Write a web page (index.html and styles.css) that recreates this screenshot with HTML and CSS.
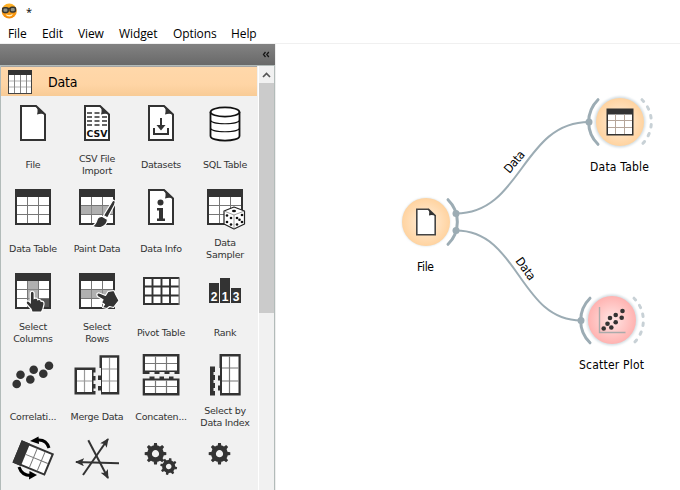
FILE: index.html
```html
<!DOCTYPE html>
<html lang="en">
<head>
<meta charset="utf-8">
<title>*</title>
<link rel="stylesheet" href="styles.css">
</head>
<body>
<svg class="defs" width="0" height="0" aria-hidden="true">
  <defs>
    <g id="page">
      <path d="M20 10H35L44 18.500V44H20Z" fill="#fff" stroke="#333" stroke-width="2"/>
      <path d="M34.500 9L45 19C42 17.500 39 17.500 36 18.500C37 15 37 12 34.500 9Z" fill="#333"/>
    </g>
    <g id="table">
      <rect x="14" y="9" width="36" height="36" fill="#333"/>
      <rect x="16" y="17" width="32" height="26" fill="#fff"/>
      <path d="M26.500 17V43M37.500 17V43M16 25.500H48M16 34.500H48" stroke="#777" fill="none"/>
    </g>
    <path id="hand" d="M29.300 29.500C29.300 26.500 33 26.500 33.200 29.500V34.500C35 33.700 36.500 34.300 36.800 35.800C38.500 35 39.900 35.800 40.200 37.300C42 36.800 43.300 38 43 40.300L42 44.500L40.500 48H31L30 45L25.500 40C24.300 37 26.500 35.800 29.300 38.500Z" fill="#333" stroke="#fff" stroke-width="1.200"/>
    <g id="gear">
      <circle r="6" fill="none" stroke="#333" stroke-width="4.800"/>
      <path d="M-1.900-7.500L-1.400-10.800H1.400L1.900-7.500ZM-1.900 7.500L-1.400 10.800H1.400L1.900 7.500ZM-7.500-1.900L-10.800-1.400V1.400L-7.500 1.900ZM7.500-1.900L10.800-1.400V1.400L7.500 1.900Z" fill="#333"/>
      <path transform="rotate(45)" d="M-1.900-7.500L-1.400-10.800H1.400L1.900-7.500ZM-1.900 7.500L-1.400 10.800H1.400L1.900 7.500ZM-7.500-1.900L-10.800-1.400V1.400L-7.500 1.900ZM7.500-1.900L10.800-1.400V1.400L7.500 1.900Z" fill="#333"/>
    </g>
    <marker id="tip" markerUnits="userSpaceOnUse" markerWidth="10" markerHeight="8" refX="8" refY="4" orient="auto"><path d="M0 0L9 4L0 8L2 4Z" fill="#333"/></marker>
    <radialGradient id="orange"><stop offset="0" stop-color="#fff0de"/><stop offset="1" stop-color="#ffd3a0"/></radialGradient>
    <radialGradient id="pink"><stop offset="0" stop-color="#ffe6e5"/><stop offset="1" stop-color="#ffb3b1"/></radialGradient>
    <linearGradient id="face" x1="0" y1="0" x2="0" y2="1"><stop offset="0" stop-color="#ffb52b"/><stop offset="1" stop-color="#f58a07"/></linearGradient>
    <filter id="glow" x="-20%" y="-20%" width="140%" height="140%"><feGaussianBlur stdDeviation="1.200"/></filter>
  </defs>
</svg>

<header class="titlebar">
  <svg class="app-icon" width="16" height="16" viewBox="0 0 16 16">
    <circle cx="8.200" cy="8" r="7.600" fill="url(#face)"/>
    <path d="M1 5.500H15" stroke="#39372f" stroke-width="1.500"/>
    <rect x="1.700" y="4.800" width="5.500" height="4.600" rx="2" fill="#8f928a" stroke="#39372f" stroke-width="1.500"/>
    <rect x="9" y="4.300" width="5.500" height="4.600" rx="2" fill="#8f928a" stroke="#39372f" stroke-width="1.500"/>
    <path d="M4.500 11.300Q8.500 13 12 10.800Q11 13.800 8.300 13.600Q5.500 13.400 4.500 11.300Z" fill="#fff3c4"/>
  </svg>
  <span class="doc-name">*</span>
</header>
<nav class="menubar">
  <span>File</span><span>Edit</span><span>View</span><span>Widget</span><span>Options</span><span>Help</span>
</nav>

<main class="workspace">
  <aside class="dock">
    <div class="dock-head">
      <svg width="8" height="7" viewBox="0 0 8 7"><path d="M3.500 1L1.500 3.500L3.500 6M6.800 1L4.800 3.500L6.800 6" fill="none" stroke="#161616" stroke-width="1.300"/></svg>
    </div>
    <div class="toolbox">
      <div class="tools">
        <div class="category">
          <svg width="24" height="24" viewBox="0 0 24 24"><rect width="24" height="24" fill="#444"/><rect width="24" height="5" fill="#333"/><rect x="1" y="5" width="22" height="18" fill="#fff"/><path d="M1 11H23M1 17H23" stroke="#ccc" stroke-width="1.500"/><path d="M6.500 5V23M12.500 5V23M18.500 5V23" stroke="#888"/></svg>
          <span>Data</span>
        </div>
        <div class="grid">
          <div class="tool"><svg viewBox="0 0 64 56"><use href="#page"/></svg><span>File</span></div>
          <div class="tool"><svg viewBox="0 0 64 56"><use href="#page"/><path d="M22 17H35M22 21H42M22 25H42M22 29H42" stroke="#333" stroke-width="1.700" stroke-dasharray="5 2.500"/><text class="csv" x="32" y="41.200" textLength="21" lengthAdjust="spacingAndGlyphs">CSV</text></svg><span>CSV File<br>Import</span></div>
          <div class="tool"><svg viewBox="0 0 64 56"><use href="#page"/><path d="M25 32V38H39V32" fill="none" stroke="#333" stroke-width="2"/><path d="M31 22H33V29H36.500L32 34.500L27.500 29H31Z" fill="#333"/></svg><span>Datasets</span></div>
          <div class="tool"><svg viewBox="0 0 64 56"><path d="M17.500 16V40C17.500 46.200 46.500 46.200 46.500 40V16" fill="#fff" stroke="#111" stroke-width="1.800"/><ellipse cx="32" cy="16" rx="14.500" ry="4.600" fill="#fff" stroke="#111" stroke-width="1.800"/><path d="M17.500 24C18 29 46 29 46.500 24M17.500 32C18 37 46 37 46.500 32" fill="none" stroke="#111" stroke-width="1.200"/></svg><span>SQL Table</span></div>

          <div class="tool"><svg viewBox="0 0 64 56"><use href="#table"/></svg><span>Data Table</span></div>
          <div class="tool"><svg viewBox="0 0 64 56"><use href="#table"/><path d="M16 26H48V34H16Z" fill="#b0b0b0"/><path d="M26.500 26V34M37.500 26V34" stroke="#888"/><path d="M48 20L50.500 21.500L49.500 25L42.500 38L38.500 35.500L46.500 22.500ZM37.500 36.500L42.500 39.500C42 46 35 50 27 46C31 45 31 42 32.500 38.500C34 36.500 35.500 36 37.500 36.500Z" fill="#333" stroke="#fff" stroke-width="1.200"/></svg><span>Paint Data</span></div>
          <div class="tool"><svg viewBox="0 0 64 56"><use href="#page"/><circle cx="31.500" cy="22.500" r="3" fill="#333"/><path d="M28 28H34V38.500H36V41H28V38.500H30V30.500H28Z" fill="#333"/></svg><span>Data Info</span></div>
          <div class="tool"><svg viewBox="0 0 64 56"><use href="#table"/><path d="M31 31L41 27L51.500 31V44L41 49L31 44Z" fill="#fff" stroke="#222" stroke-width="1.200" stroke-linejoin="round"/><path d="M31 31L41 35L51.500 31M41 35V49" fill="none" stroke="#777" stroke-width=".7"/><g fill="#111"><ellipse cx="41" cy="31" rx="2" ry="1.200"/><circle cx="34" cy="35.500" r="1.300"/><circle cx="38" cy="38" r="1.300"/><circle cx="34" cy="42" r="1.300"/><circle cx="38" cy="44.500" r="1.300"/><circle cx="44" cy="38" r="1.300"/><circle cx="49" cy="35" r="1.300"/><circle cx="46.500" cy="39.800" r="1.300"/><circle cx="44" cy="44.500" r="1.300"/><circle cx="49" cy="42" r="1.300"/></g></svg><span>Data<br>Sampler</span></div>

          <div class="tool"><svg viewBox="0 0 64 56"><use href="#table"/><path d="M27 17H37V43H27Z" fill="#b0b0b0"/><path d="M27 25.500H37M27 34.500H37" stroke="#888"/><path d="M38 35H48V43H38Z" fill="#555"/><use href="#hand"/></svg><span>Select<br>Columns</span></div>
          <div class="tool"><svg viewBox="0 0 64 56"><use href="#table"/><path d="M16 26H48V34H16Z" fill="#b0b0b0"/><path d="M26.500 26V34M37.500 26V34" stroke="#888"/><path d="M32.500 32.500C30.500 29 33.500 28.500 35 29.300L40.500 31.500L43 27.500L49 26.500L51 31L54 36.500L48.500 43.500L44.500 42.500L42 44.500L37.500 43.500L39.500 40.500L36.500 38.500L38 35.800Z" fill="#333" stroke="#fff" stroke-width="1.200" stroke-linejoin="round"/></svg><span>Select<br>Rows</span></div>
          <div class="tool"><svg viewBox="0 0 64 56"><rect x="14.500" y="13.500" width="36" height="27" fill="#fff" stroke="#aaa"/><path d="M15 14H50M15 22.500H50M15 31.500H50M15 40H50M15 13V41M23.500 14V40M32.500 14V40M41 14V40" stroke="#333" stroke-width="1.900"/><path d="M50 14V41" stroke="#777"/></svg><span>Pivot Table</span></div>
          <div class="tool"><svg viewBox="0 0 64 56"><path d="M16 19H26V39H16ZM27 14H37V39H27ZM38 24H48V39H38Z" fill="#333"/><g class="rank"><text x="21" y="36.500">2</text><text x="32" y="36.500">1</text><text x="43" y="36.500">3</text></g></svg><span>Rank</span></div>

          <div class="tool"><svg viewBox="0 0 64 56"><g fill="#333"><circle cx="15.700" cy="36" r="4.300"/><circle cx="19.500" cy="26.700" r="4.300"/><circle cx="29.300" cy="31.500" r="4.300"/><circle cx="32.700" cy="21.700" r="4.300"/><circle cx="42.300" cy="25.700" r="4.300"/><circle cx="48" cy="17.700" r="4.300"/></g></svg><span>Correlati...</span></div>
          <div class="tool"><svg viewBox="0 0 64 56"><path d="M9.500 19.500H30.500V24.500H28.500V28H30.500V32.500H28.500V36H30.500V40.500H28.500V43H30.500V46.500H9.500Z" fill="#333"/><path d="M12 22H27V44H12Z" fill="#fff"/><path d="M19.500 22V44M12 33H27" stroke="#999" stroke-width="1.200"/><path d="M34.500 7.300H54.300V46.500H36V42.500H33V38H36V32H33V27.500H36V20H34.500Z" fill="#333"/><path d="M37 9.700H52V44H37Z" fill="#fff"/><path d="M44.500 10V44M37 21H52M37 33H52" stroke="#999" stroke-width="1.200"/></svg><span>Merge Data</span></div>
          <div class="tool"><svg viewBox="0 0 64 56"><path d="M13.700 6H50.500V26H45.500V24H40.500V26H35.500V24H30.500V26H25.500V24H20.500V26H13.700Z" fill="#333"/><path d="M16 8.500H48V22.500H16Z" fill="#fff"/><path d="M16 15.500H48M26.500 8.500V22.500M37.500 8.500V22.500" stroke="#777" stroke-width="1.200"/><path d="M13.700 30.500H20.500V28.500H25.500V30.500H30.500V28.500H35V30.500H40V28.500H44.500V30.500H50.500V47.500H13.700Z" fill="#333"/><path d="M16 32.500H48V45H16Z" fill="#fff"/><path d="M16 38.500H48M26.500 32.500V45M37.500 32.500V45" stroke="#777" stroke-width="1.200"/></svg><span>Concaten...</span></div>
          <div class="tool"><svg viewBox="0 0 64 56"><path d="M17 18.500H22V24H20.500V27H22V32H20.500V35H22V40H20.500V43H22V47.500H17Z" fill="#333"/><path d="M26.500 6H47.700V47.500H27V42.500H25V37.500H27V32.500H25V27.500H27V20H26.500Z" fill="#333"/><path d="M29 8.500H45.500V45H29Z" fill="#fff"/><path d="M36.500 8.500V45M29 20H45.500M29 33H45.500" stroke="#777" stroke-width="1.200"/></svg><span>Select by<br>Data Index</span></div>

          <div class="tool"><svg viewBox="0 0 64 56"><g transform="translate(20.700 8.300) rotate(22.500)"><rect x="1" y="1" width="33" height="22" fill="#fff" stroke="#333" stroke-width="2"/><rect width="9" height="24" fill="#333"/><path d="M17.500 2V22M26 2V22M9 11.500H33" stroke="#777"/></g><path d="M48 16C46 9.500 41 7 34 8.500" fill="none" stroke="#000" stroke-width="3"/><path d="M29 9L37.500 4.500L38 12Z" fill="#000"/><path d="M18 35C20 41 24 44 31 43.500" fill="none" stroke="#000" stroke-width="3"/><path d="M36 43L28.500 39L28 47.500Z" fill="#000"/></svg></div>
          <div class="tool"><svg viewBox="0 0 64 56"><g stroke="#333" stroke-width="2"><path d="M23.300 8.300L43 46" marker-end="url(#tip)"/><path d="M18 43L43 7" marker-end="url(#tip)"/><path d="M54 31.300L11 30" marker-end="url(#tip)"/></g></svg></div>
          <div class="tool"><svg viewBox="0 0 64 56"><use href="#gear" transform="translate(26.500 21.700)"/><use href="#gear" transform="translate(39.700 34.500) rotate(12) scale(.78)"/></svg></div>
          <div class="tool"><svg viewBox="0 0 64 56"><use href="#gear" transform="translate(26.500 21.700)"/></svg></div>
        </div>
      </div>
      <div class="scrollbar">
        <div class="scroll-up"><svg width="9" height="6" viewBox="0 0 9 6"><path d="M1 5L4.500 1.500L8 5" fill="none" stroke="#555" stroke-width="1.700"/></svg></div>
        <div class="thumb"></div>
      </div>
    </div>
  </aside>

  <section class="canvas">
    <svg width="404" height="446" viewBox="276 44 404 446">
      <g fill="none" stroke="#9cacb4" stroke-width="2">
        <path d="M456 213.500C522 213.500 522 122 589 122"/>
        <path d="M456 230.500C519 230.500 519 320.500 581 320.500"/>
      </g>
      <g fill="none" stroke="#9cacb4" stroke-width="3" stroke-linecap="round">
        <path d="M448 199.700A31.300 31.300 0 0 1 448 244.300"/>
        <path d="M598 99.700A31.300 31.300 0 0 0 598 144.300"/>
        <path d="M590 298.200A31.300 31.300 0 0 0 590 342.800"/>
        <g stroke="#c8d1d6" stroke-dasharray="2.500 6.600">
          <path d="M642 99.700A31.300 31.300 0 0 1 642 144.300"/>
          <path d="M634 298.200A31.300 31.300 0 0 1 634 342.800"/>
        </g>
      </g>
      <g fill="#9cacb4"><circle cx="456" cy="213.500" r="3.500"/><circle cx="456" cy="230.500" r="3.500"/><circle cx="589" cy="122" r="3.500"/><circle cx="581" cy="320.500" r="3.500"/></g>
      <g fill="#d3dde2" filter="url(#glow)"><circle cx="426" cy="222" r="24"/><circle cx="620" cy="122" r="25.500"/><circle cx="612" cy="320" r="25.500"/></g>
      <circle cx="426" cy="222" r="24" fill="url(#orange)"/>
      <circle cx="620" cy="122" r="24" fill="url(#orange)"/>
      <circle cx="612" cy="320" r="24" fill="url(#pink)"/>
      <path d="M416.800 209.300H428.500L435.200 215.500V234.700H416.800Z" fill="#fff" stroke="#444" stroke-width="1.600"/>
      <path d="M428 208.500L436 216Q432 214.500 429 215.500Q430 212 428 208.500Z" fill="#333"/>
      <g><rect x="606.500" y="108.500" width="27" height="27" fill="#333"/><path d="M608 114.500H632V134H608Z" fill="#fff"/><path d="M615.500 114.500V134M624.500 114.500V134M608 120.500H632M608 127.500H632" stroke="#b5a599"/></g>
      <path d="M599.500 307V332.500H625.500" fill="none" stroke="#aaa" stroke-width="1.400"/>
      <g fill="#333"><circle cx="603.700" cy="328.500" r="2.300"/><circle cx="607.500" cy="323.800" r="2.300"/><circle cx="611.300" cy="327.500" r="2.300"/><circle cx="610" cy="318" r="2.300"/><circle cx="615.700" cy="322.300" r="2.300"/><circle cx="615.700" cy="315" r="2.300"/><circle cx="621.700" cy="317.800" r="2.300"/><circle cx="622.500" cy="311" r="2.300"/></g>
      <g class="node-label">
        <text x="425.500" y="271" textLength="17">File</text>
        <text x="619.500" y="171" textLength="59">Data Table</text>
        <text x="611.500" y="369" textLength="65">Scatter Plot</text>
        <text transform="translate(514 161.500) rotate(-50)" y="4.500" textLength="25">Data</text>
        <text transform="translate(526 268.500) rotate(54)" y="4.500" textLength="25">Data</text>
      </g>
    </svg>
  </section>
</main>
</body>
</html>
```
FILE: styles.css
```css
* { box-sizing: border-box; }

body {
  margin: 0;
  width: 680px;
  height: 490px;
  overflow: hidden;
  display: flex;
  flex-direction: column;
  background: #fff;
  color: #000;
  font: 12px "Open Sans", "Noto Sans", sans-serif;
}

.defs { position: absolute; }

.titlebar {
  flex: none;
  height: 24px;
  display: flex;
  align-items: flex-start;
  gap: 9px;
  padding: 3px 0 0 1px;
}

.doc-name {
  font-size: 11px;
  line-height: 17px;
}

.menubar {
  flex: none;
  height: 20px;
  display: grid;
  grid-template-columns: 34px 36px 41px 54px 58px 40px;
  padding-left: 8px;
  line-height: 20px;
  letter-spacing: -0.1px;
  border-bottom: 1px solid #f0f0f0;
}

.workspace {
  flex: 1;
  min-height: 0;
  display: flex;
}

.dock {
  flex: none;
  width: 276px;
  display: flex;
  flex-direction: column;
  border-right: 1px solid #eee;
}

.dock-head {
  flex: none;
  height: 21px;
  display: flex;
  align-items: center;
  justify-content: flex-end;
  padding-right: 5px;
  background: linear-gradient(#828282, #696969);
}

.toolbox {
  flex: 1;
  min-height: 0;
  display: flex;
  border: 1px solid #b2bbb9;
  border-width: 1px 1px 0;
  background: #f1f1f1;
}

.tools {
  width: 256px;
  overflow: hidden;
}

.category {
  height: 30px;
  display: flex;
  align-items: center;
  gap: 16px;
  padding-left: 7px;
  background: linear-gradient(#ffd8aa, #ffd5a5 60%, #f8cb96);
  border-top: 1px solid #a3a3a3;
  font: 14px "DejaVu Sans Condensed", "DejaVu Sans", sans-serif;
  font-stretch: condensed;
  letter-spacing: -0.2px;
}

.grid {
  display: grid;
  grid-template-columns: repeat(4, 64px);
  grid-auto-rows: 84px;
}

.tool {
  display: flex;
  flex-direction: column;
  align-items: center;
}

.tool > svg {
  flex: none;
  width: 64px;
  height: 56px;
}

.tool > span {
  height: 25px;
  display: grid;
  align-content: center;
  text-align: center;
  white-space: nowrap;
  color: #333;
  font: 9.5px/12px "DejaVu Sans", sans-serif;
  letter-spacing: -0.25px;
}

.csv {
  font: bold 9px "DejaVu Sans", sans-serif;
  text-anchor: middle;
  fill: #111;
}

.rank {
  font: bold 12px "Liberation Sans", sans-serif;
  text-anchor: middle;
  fill: #fff;
}

.scrollbar {
  width: 16px;
  margin-left: auto;
  background: #f1f1f1;
  border-left: 1px solid #fff;
}

.scroll-up {
  height: 17px;
  display: grid;
  place-items: center;
}

.thumb {
  height: 230px;
  background: #cbcbcb;
}

.canvas {
  flex: 1;
  background: #fff;
}

.canvas > svg { display: block; }

.node-label {
  font: 12px "DejaVu Sans Condensed", "DejaVu Sans", sans-serif;
  font-stretch: condensed;
  text-anchor: middle;
}
```
